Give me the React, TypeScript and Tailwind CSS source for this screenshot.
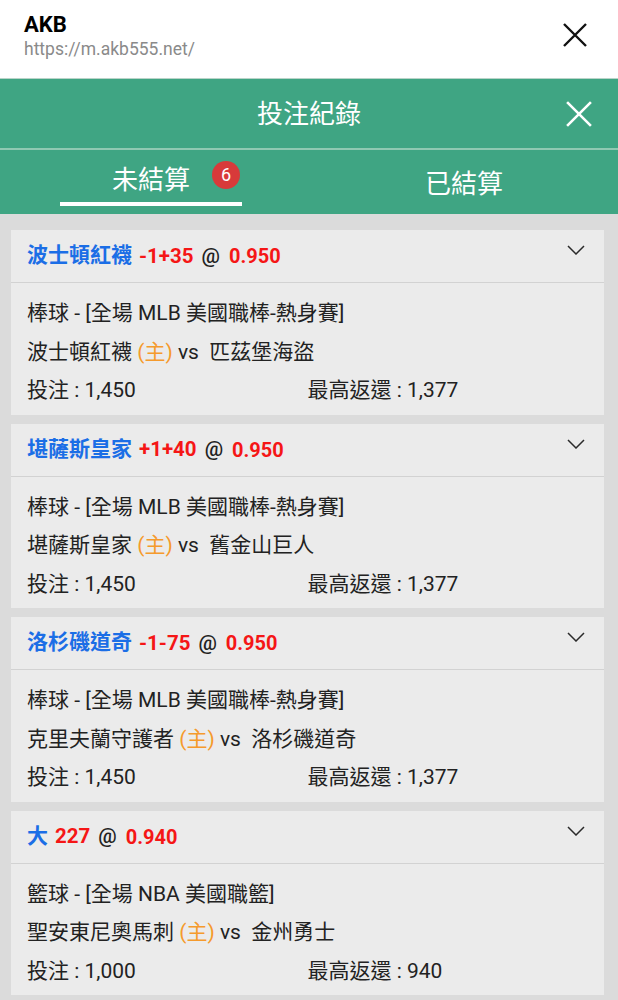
import React from "react";

type Bet = {
  pick: string;
  line: string;
  odds: string;
  league: string;
  home: string;
  away: string;
  stake: string;
  ret: string;
};

const bets: Bet[] = [
  {
    pick: "波士頓紅襪",
    line: "-1+35",
    odds: "0.950",
    league: "棒球 - [全場 MLB 美國職棒-熱身賽]",
    home: "波士頓紅襪",
    away: "匹茲堡海盜",
    stake: "1,450",
    ret: "1,377",
  },
  {
    pick: "堪薩斯皇家",
    line: "+1+40",
    odds: "0.950",
    league: "棒球 - [全場 MLB 美國職棒-熱身賽]",
    home: "堪薩斯皇家",
    away: "舊金山巨人",
    stake: "1,450",
    ret: "1,377",
  },
  {
    pick: "洛杉磯道奇",
    line: "-1-75",
    odds: "0.950",
    league: "棒球 - [全場 MLB 美國職棒-熱身賽]",
    home: "克里夫蘭守護者",
    away: "洛杉磯道奇",
    stake: "1,450",
    ret: "1,377",
  },
  {
    pick: "大",
    line: "227",
    odds: "0.940",
    league: "籃球 - [全場 NBA 美國職籃]",
    home: "聖安東尼奧馬刺",
    away: "金州勇士",
    stake: "1,000",
    ret: "940",
  },
];

function XIcon({ size, color, stroke }: { size: number; color: string; stroke: number }) {
  return (
    <svg width={size} height={size} viewBox="0 0 24 24" fill="none">
      <path d="M1 1L23 23M23 1L1 23" stroke={color} strokeWidth={stroke} strokeLinecap="butt" />
    </svg>
  );
}

function Chevron() {
  return (
    <svg width="18" height="10" viewBox="0 0 18 10" fill="none">
      <path d="M1 1L9 9L17 1" stroke="#2a2a2a" strokeWidth="1.5" />
    </svg>
  );
}

function BetCard({ b }: { b: Bet }) {
  return (
    <div className="bg-[#ebebeb]">
      <div className="h-[52px] flex items-start justify-between pl-4 pr-[19px]">
        <div className="h-[52px] flex items-center text-[21px] font-bold">
          <span className="text-[#1b6ee6]">{b.pick}</span>
          <span className="text-[#f51616] ml-[7px] text-[20.5px]">{b.line}</span>
          <span className="text-[#222] ml-[8px] font-medium text-[20.5px]">@</span>
          <span className="text-[#f51616] ml-[9px] text-[20px]">{b.odds}</span>
        </div>
        <div className="mt-[15px]">
          <Chevron />
        </div>
      </div>
      <div className="h-px bg-[#d2d2d2]" />
      <div className="pl-4 pr-4 pt-[11px] pb-[5px] text-[21px] text-[#222] leading-[38.5px]">
        <div>{b.league}</div>
        <div>
          {b.home} <span className="text-[#f59a2c]">(主)</span> vs&nbsp; {b.away}
        </div>
        <div className="grid grid-cols-2">
          <div>投注 : {b.stake}</div>
          <div>最高返還 : {b.ret}</div>
        </div>
      </div>
    </div>
  );
}

export default function App() {
  return (
    <div
      className="w-[618px] h-[1000px] overflow-hidden bg-[#dbdbdb]"
      style={{ fontFamily: "Roboto, 'Noto Sans CJK TC', sans-serif" }}
    >
      <div className="h-[78px] bg-white flex items-start justify-between pl-6 pr-[31px]">
        <div className="pt-[12px]">
          <div className="text-[22px] font-bold leading-[26px] text-black">AKB</div>
          <div className="text-[17.5px] leading-[22px] text-[#8a8a8a]">https://m.akb555.net/</div>
        </div>
        <div className="mt-[23px]">
          <XIcon size={24} color="#111" stroke={2.4} />
        </div>
      </div>
      <div className="h-px bg-[#b9d4c8]" />
      <div className="bg-[#3fa583]">
        <div className="h-[69px] flex items-center justify-between pl-[26px] pr-[26px]">
          <div className="w-[26px]" />
          <div className="text-white text-[26px] leading-none">投注紀錄</div>
          <XIcon size={26} color="#fff" stroke={2.4} />
        </div>
        <div className="h-[2px] bg-[#8fc9b2]" />
        <div className="h-[64px] flex">
          <div className="w-[302px] flex flex-col items-center">
            <div className="relative mt-[16px] text-white text-[26px] leading-[28px]">
              未結算
              <div className="absolute left-[100px] top-[-5px] w-[28px] h-[28px] rounded-full bg-[#d83a3a] flex items-center justify-center text-white text-[18px] leading-none">
                6
              </div>
            </div>
            <div className="mt-[8px] w-[182px] h-[4px] bg-white" />
          </div>
          <div className="flex-1 flex justify-center pl-[8px]">
            <div className="mt-[20px] text-white text-[26px] leading-[28px]">已結算</div>
          </div>
        </div>
      </div>
      <div className="pt-4 pl-[11px] pr-[14px] flex flex-col gap-[9px]">
        {bets.map((b, i) => (
          <BetCard key={i} b={b} />
        ))}
      </div>
    </div>
  );
}
